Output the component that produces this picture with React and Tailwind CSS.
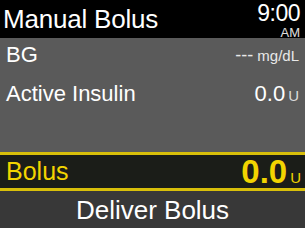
import React from "react";

export default function App() {
  return (
    <div
      className="w-[305px] h-[228px] flex flex-col bg-[#5a5a5a] overflow-hidden"
      style={{ fontFamily: '"Liberation Sans", Arial, sans-serif' }}
    >
      {/* header */}
      <div className="h-[38px] bg-black flex items-start justify-between px-[3px] shrink-0">
        <div className="text-[26px] leading-none text-white mt-[6px] tracking-[-0.2px]">Manual Bolus</div>
        <div className="flex flex-col items-end text-white leading-none mt-[2px] mr-[2px]">
          <span className="text-[23px] leading-none tracking-[-0.5px]">9:00</span>
          <span className="text-[13px] leading-none mt-[1px] text-[#e0e0e0]">AM</span>
        </div>
      </div>

      {/* info rows */}
      <div className="flex-1 flex flex-col">
        <div className="h-[34px] flex items-center justify-between pl-[6px] pr-[6px] text-white">
          <span className="text-[22px] leading-none">BG</span>
          <span className="flex items-baseline gap-[4px] text-[#e8e8e8]">
            <span className="text-[18px] leading-none">---</span>
            <span className="text-[15px] leading-none">mg/dL</span>
          </span>
        </div>
        <div className="h-[43px] flex items-center justify-between pl-[6px] pr-[6px] text-white">
          <span className="text-[22px] leading-none">Active Insulin</span>
          <span className="flex items-baseline gap-[3px]">
            <span className="text-[22px] leading-none">0.0</span>
            <span className="text-[15px] leading-none text-[#dcdcdc]">U</span>
          </span>
        </div>
      </div>

      {/* bolus row */}
      <div className="h-[39px] shrink-0 bg-[#1b1d18] border-y-[3px] border-[#d8bf0a] flex items-center justify-between pl-[6px] pr-[4px]">
        <span className="text-[25px] leading-none text-[#f2d400]">Bolus</span>
        <span className="flex items-baseline gap-[3px] text-[#f2d400]">
          <span className="text-[33px] leading-none font-bold">0.0</span>
          <span className="text-[15px] leading-none">U</span>
        </span>
      </div>

      {/* action */}
      <div className="h-[37px] shrink-0 bg-[#383838] flex items-center justify-center">
        <span className="text-[26px] leading-none text-white">Deliver Bolus</span>
      </div>
    </div>
  );
}
